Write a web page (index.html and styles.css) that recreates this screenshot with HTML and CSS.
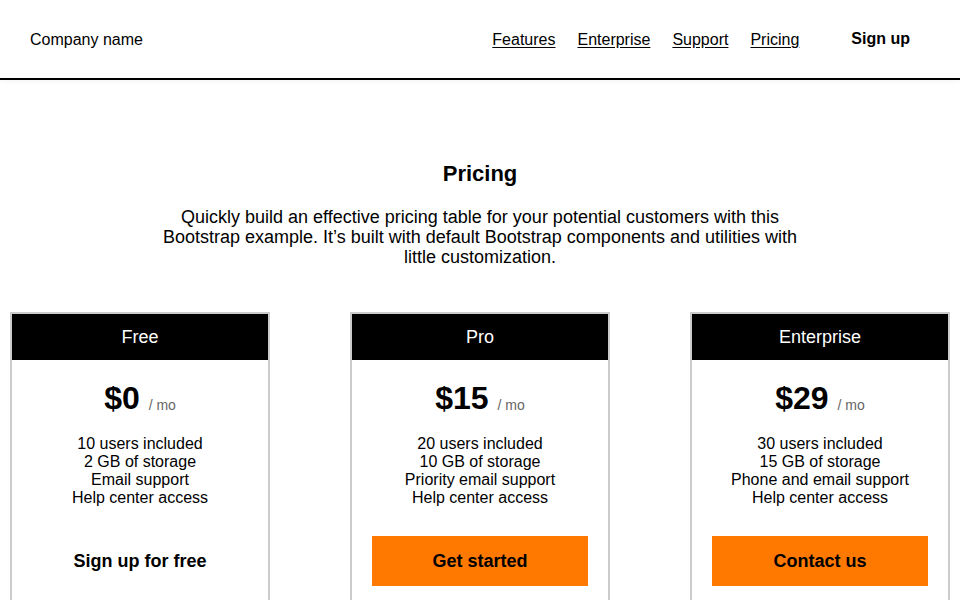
FILE: index.html
```html
<!DOCTYPE html>
<html lang="en">
<head>
<meta charset="utf-8">
<title>Pricing</title>
<link rel="stylesheet" href="styles.css">
</head>
<body>
<header class="topbar">
  <div class="brand">Company name</div>
  <nav class="nav">
    <a href="#">Features</a>
    <a href="#">Enterprise</a>
    <a href="#">Support</a>
    <a href="#">Pricing</a>
  </nav>
  <a class="signup" href="#">Sign up</a>
</header>
<main>
  <section class="intro">
    <h1>Pricing</h1>
    <p>Quickly build an effective pricing table for your potential customers with this Bootstrap example. It’s built with default Bootstrap components and utilities with little customization.</p>
  </section>
  <section class="cards">
    <div class="card">
      <div class="card-head">Free</div>
      <div class="card-body">
        <div class="price">$0 <small>/ mo</small></div>
        <ul class="features">
          <li>10 users included</li>
          <li>2 GB of storage</li>
          <li>Email support</li>
          <li>Help center access</li>
        </ul>
        <button class="btn btn-outline">Sign up for free</button>
      </div>
    </div>
    <div class="card">
      <div class="card-head">Pro</div>
      <div class="card-body">
        <div class="price">$15 <small>/ mo</small></div>
        <ul class="features">
          <li>20 users included</li>
          <li>10 GB of storage</li>
          <li>Priority email support</li>
          <li>Help center access</li>
        </ul>
        <button class="btn btn-primary">Get started</button>
      </div>
    </div>
    <div class="card">
      <div class="card-head">Enterprise</div>
      <div class="card-body">
        <div class="price">$29 <small>/ mo</small></div>
        <ul class="features">
          <li>30 users included</li>
          <li>15 GB of storage</li>
          <li>Phone and email support</li>
          <li>Help center access</li>
        </ul>
        <button class="btn btn-primary">Contact us</button>
      </div>
    </div>
  </section>
</main>
</body>
</html>
```
FILE: styles.css
```css
* { box-sizing: border-box; }
html, body { margin: 0; padding: 0; }
body {
  font-family: "Liberation Sans", Arial, Helvetica, sans-serif;
  color: #000;
  background: #fff;
  overflow: hidden;
}
.topbar {
  display: flex;
  align-items: center;
  height: 80px;
  padding: 2px 50px 0 30px;
  border-bottom: 2px solid #000;
  box-shadow: 0 2px 4px rgba(0,0,0,0.04);
}
.brand { font-size: 16px; flex: 1; }
.nav { display: flex; gap: 22px; }
.nav a {
  color: #000;
  font-size: 16px;
  text-decoration: underline;
  text-underline-offset: 2px;
}
.signup {
  margin-left: 52px;
  font-size: 16px;
  font-weight: bold;
  color: #000;
  text-decoration: none;
  position: relative;
  top: -1px;
}
.intro {
  text-align: center;
  padding-top: 81px;
}
.intro h1 {
  margin: 0;
  font-size: 22px;
  line-height: 26px;
  font-weight: bold;
}
.intro p {
  margin: 20px auto 0;
  max-width: 660px;
  font-size: 18px;
  line-height: 20px;
}
.cards {
  display: grid;
  grid-template-columns: repeat(3, 260px);
  justify-content: space-between;
  padding: 0 10px;
  margin-top: 45px;
}
.card {
  border: 2px solid #ccc;
  border-bottom: none;
  text-align: center;
  height: 300px;
}
.card-head {
  background: #000;
  color: #fff;
  height: 46px;
  line-height: 46px;
  font-size: 18px;
}
.card-body { padding: 19px 20px 0; }
.price {
  font-size: 32px;
  font-weight: bold;
  line-height: 38px;
}
.price small {
  font-size: 14px;
  font-weight: normal;
  color: #666;
  position: relative;
  top: 1px;
}
.features {
  list-style: none;
  margin: 12px 0 0;
  padding: 0;
  font-size: 16px;
  line-height: 18px;
}
.btn {
  display: block;
  width: 100%;
  height: 50px;
  margin-top: 29px;
  border: none;
  font-family: inherit;
  font-size: 18px;
  font-weight: bold;
  color: #000;
  cursor: pointer;
}
.btn-outline { background: transparent; }
.btn-primary { background: #ff7900; }
```
